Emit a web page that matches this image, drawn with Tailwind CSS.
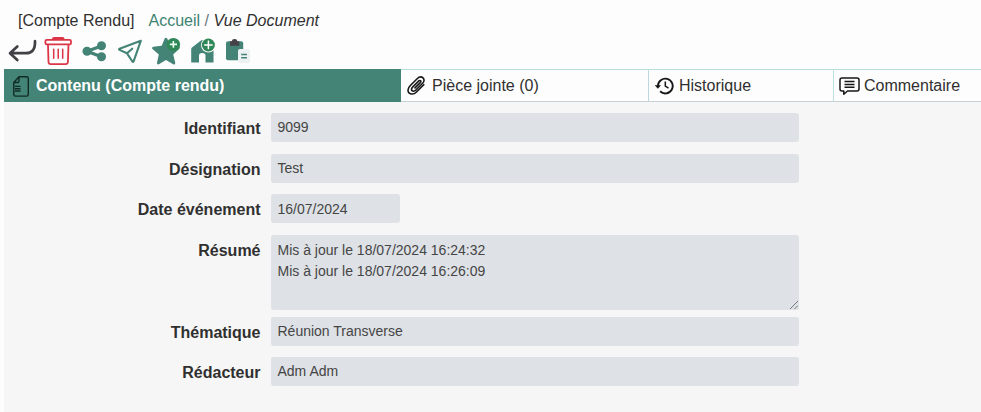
<!DOCTYPE html>
<html lang="fr">
<head>
<meta charset="utf-8">
<title>Compte Rendu</title>
<script src="https://cdn.jsdelivr.net/npm/@tailwindcss/browser@4"></script>
</head>
<body class="h-[412px] w-[981px] overflow-hidden bg-[#fdfdfd] pl-1 font-['Liberation_Sans',Arial,sans-serif] text-[16px] leading-[20px] text-[#303030]">
<nav class="flex h-[37px] items-start whitespace-pre pt-[11px] pl-[14px]"><span class="w-[130.5px]">[Compte Rendu]</span><a class="text-[#3d8371]">Accueil</a><span class="text-[#6c757d]"> / </span><span class="italic">Vue Document</span></nav>
<div class="flex h-8 items-start">
  <svg class="h-8 w-9" viewBox="4 37 36 32" fill="none" stroke="#414045" stroke-width="2.7" stroke-linecap="round" stroke-linejoin="round"><path d="M35 41.2C35.3 49.5 32 53.2 26 53.2H10.5M17.3 46.4L10 53.2L17.3 60"/></svg>
  <svg class="h-8 w-9" viewBox="40 37 36 32" fill="none" stroke="#dc3545" stroke-width="1.8" stroke-linejoin="round" stroke-linecap="round"><path d="M53 38.9Q53 38 54 38H62.5Q63.5 38 63.5 38.9" stroke-width="2"/><rect x="45.4" y="39.8" width="25.6" height="4.6" rx="1.5"/><path d="M48 44.8L48.5 62Q48.7 64.2 50.7 64.2H65.7Q67.7 64.2 67.9 62L68.5 44.8"/><path d="M53.7 49.3V58.2M58.2 49.3V58.2M62.7 49.3V58.2" stroke-width="1.5"/></svg>
  <svg class="h-8 w-9" viewBox="76 37 36 32" fill="#438477"><path d="M102 45.7L87 51.2L102 57" fill="none" stroke="#438477" stroke-width="3.2"/><circle cx="87" cy="51.2" r="4.5"/><circle cx="101.5" cy="45.7" r="4.5"/><circle cx="101.5" cy="56.8" r="4.5"/></svg>
  <svg class="h-8 w-9" viewBox="112 37 36 32" fill="none" stroke="#438477" stroke-width="2.1" stroke-linejoin="round" stroke-linecap="round"><path d="M140.8 40.8L119.6 48.7Q118.7 49.2 119.5 49.9L127 53.3L132.4 61.5Q133.1 62.4 133.6 61.3L140.8 40.8ZM127 53.3L132.2 48.7"/></svg>
  <svg class="h-8 w-9" viewBox="148 37 36 32"><path d="M164.8 38.2Q166.2 36.9 167.5 39L170 46L178.6 46.5Q180.7 47.2 179.1 49L173.2 54.4L175.3 63Q175.1 65.1 173.2 64.3L166 60L158.9 64.3Q156.8 65 157 62.7L158.8 54.5L152.5 49.1Q151.3 47.3 153.3 46.8L161.7 45.7Z" fill="#438477"/><circle cx="173.4" cy="44.6" r="6.7" fill="#2f8657"/><path d="M173.4 40.9V47.8M169.8 44.4H177" stroke="#e8fff1" stroke-width="1.6"/></svg>
  <svg class="h-8 w-9" viewBox="184 37 36 32"><path d="M191.2 62.4V49.3Q191.2 48.2 192 47.5L201 40.4Q202.2 39.6 203.4 40.4L212.8 48Q213.5 48.6 213.5 49.6V62.4H205.5V55.6Q205.5 53 202.2 53T199 55.6V62.4Z" fill="#438477"/><circle cx="208.4" cy="45" r="7.4" fill="#fdfdfd"/><circle cx="208.4" cy="45" r="6.5" fill="#2f8657"/><path d="M208.4 40.6V49.2M204.1 44.9H212.7" stroke="#fff" stroke-width="1.5"/></svg>
  <svg class="h-8 w-9" viewBox="220 37 36 32"><rect x="226" y="41.3" width="17.2" height="19" rx="2" fill="#438477"/><path d="M230 45.7V41.2H232Q231.9 39 234.6 39T237.2 41.2H239.3V45.7Z" fill="#454349"/><rect x="238" y="49" width="12" height="14" rx="2" fill="#eef1f2"/><path d="M241.2 54.5H247M241.2 57.7H247" stroke="#438477" stroke-width="1.4"/></svg>
</div>
<div class="flex h-[33px] border-t border-b border-t-[#badfda] border-b-[#c6d2d7] bg-[#fdfdfd]">
  <div class="-my-px flex w-[397px] items-center bg-[#438477] pl-2 text-white"><svg class="mr-[6px] h-[22px] w-[18px]" viewBox="12 74 18 22" fill="none" stroke="#102b24" stroke-width="1.4" stroke-linejoin="round"><path d="M19 75.8H26.5Q28.3 75.8 28.3 77.5V93.5Q28.3 95.1 26.5 95.1H15.5Q13.8 95.1 13.8 93.5V81.5ZM19 75.8V80Q19 81.5 17.5 81.5H13.8M15 85.4H20.5M15 87.7H20.5M15 90H20.5"/></svg><b>Contenu (Compte rendu)</b></div>
  <div class="flex w-[247px] items-center pl-[6px]"><svg class="mr-[6px] h-[21px] w-[19px]" viewBox="0 0 19 21" fill="none" stroke="#171717" stroke-width="1.6" stroke-linecap="round" stroke-linejoin="round"><path d="M11.9 5.9L5.6 12.1C4.3 13.4 4.2 14.8 5 15.6S7.3 16.5 8.6 15.2L15.6 8.3C17.4 6.5 17.4 4.3 16 2.9S12.3 1.6 10.4 3.5L3.1 10.8C.7 13.2 .5 16.4 2 17.9S6.8 19.6 9.2 17.2L16.8 9.7M11.9 5.9C13.3 4.7 14.6 6.2 13.3 7.6L8 12.9"/></svg>Pièce jointe (0)</div>
  <div class="flex w-[185px] items-center border-l border-[#bcd8de] pl-[6px]"><svg class="mr-[5px] h-5 w-[19px]" viewBox="0 0 19 20" fill="none" stroke="#171717" stroke-width="1.9"><path d="M2.9 10A7.4 7.4 0 1 1 5.1 15.3"/><path d="M-.2 9.3H6L2.9 12.8Z" fill="#171717" stroke="none"/><path d="M10.3 5.6V10.2L13.5 12.2" stroke-width="1.5"/></svg>Historique</div>
  <div class="flex flex-1 items-center border-l border-[#bce2df] pl-[5px]"><svg class="mr-[4px] h-5 w-[21px]" viewBox="0 0 21 20" fill="none" stroke="#171717" stroke-width="1.5" stroke-linejoin="round"><path d="M3 2H18Q20 2 20 4V13Q20 15 18 15H8.5L4.8 18.2V15H3Q1 15 1 13V4Q1 2 3 2ZM5.5 5.6H15.5M5.5 8.4H15.5M5.5 11.2H15.5"/></svg>Commentaire</div>
</div>
<main class="grid h-[310px] grid-cols-[256.5px_528.5px] content-start gap-x-[10px] bg-[#f6f6f6] pt-[11px] text-[14px] text-[#454545]">
  <b class="h-[40.5px] pt-[6.4px] text-right text-[16px] text-[#303030]">Identifiant</b>
  <div class="h-[29px] rounded-[3px] bg-[#dee1e5] px-[7px] pt-[4.4px]">9099</div>
  <b class="h-[40.5px] pt-[6.4px] text-right text-[16px] text-[#303030]">Désignation</b>
  <div class="h-[29px] rounded-[3px] bg-[#dee1e5] px-[7px] pt-[4.4px]">Test</div>
  <b class="h-[40.5px] pt-[6.4px] text-right text-[16px] text-[#303030]">Date événement</b>
  <div class="h-[29px] w-[129px] rounded-[3px] bg-[#dee1e5] px-[7px] pt-[4.9px]">16/07/2024</div>
  <b class="h-[82px] pt-[6.4px] text-right text-[16px] text-[#303030]">Résumé</b>
  <div class="relative h-[75px] rounded-[3px] bg-[#dee1e5] px-[7px] pt-[5px] leading-[21px]">Mis à jour le 18/07/2024 16:24:32<br>Mis à jour le 18/07/2024 16:26:09<svg class="absolute right-[1px] bottom-[1px] h-2 w-2" viewBox="0 0 8 8" stroke="#777b80" stroke-width="1"><path d="M0 8L8 0M4.5 8L8 4.5"/></svg></div>
  <b class="h-[40.5px] pt-[6.4px] text-right text-[16px] text-[#303030]">Thématique</b>
  <div class="h-[29px] rounded-[3px] bg-[#dee1e5] px-[7px] pt-[4.4px]">Réunion Transverse</div>
  <b class="h-[40.5px] pt-[6.4px] text-right text-[16px] text-[#303030]">Rédacteur</b>
  <div class="h-[29px] rounded-[3px] bg-[#dee1e5] px-[7px] pt-[4.4px]">Adm Adm</div>
</main>
</body>
</html>
